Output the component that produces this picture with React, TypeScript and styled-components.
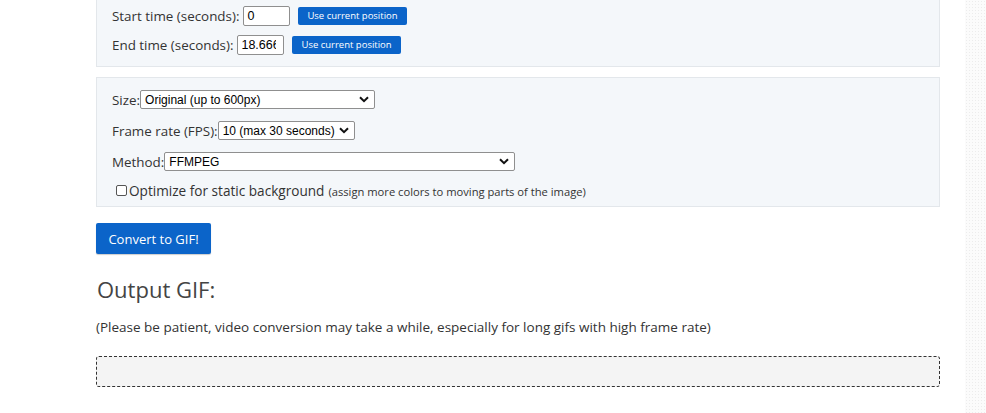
import React from "react";
import styled, { createGlobalStyle } from "styled-components";

const GlobalStyle = createGlobalStyle`
  html, body {
    margin: 0;
    padding: 0;
    background: #ffffff;
    overflow: hidden;
  }
  body {
    font-family: "Open Sans", "Liberation Sans", sans-serif;
    color: #333333;
  }
  * {
    box-sizing: border-box;
  }
`;

const Page = styled.div`
  display: flex;
  height: 413px;
`;

const Main = styled.div`
  flex: 1;
`;

const Column = styled.div`
  width: 844px;
  margin-left: 96px;
  display: flex;
  flex-direction: column;
`;

const Strip = styled.div`
  width: 21px;
  height: 413px;
  background-color: #fbfbfb;
  background-image: radial-gradient(#ececec 0.6px, transparent 0.7px);
  background-size: 3px 3px;
`;

const Panel = styled.div<{ $top?: boolean }>`
  background: #f4f7fa;
  border: 1px solid #e3e7eb;
  border-top: ${(p) => (p.$top ? "none" : "1px solid #e3e7eb")};
  padding: ${(p) => (p.$top ? "5px 15px 11px" : "12px 15px 6px")};
  margin-bottom: 10px;
  display: flex;
  flex-direction: column;
`;

const Row = styled.div<{ $h: number; $pt?: number }>`
  display: flex;
  align-items: center;
  height: ${(p) => p.$h}px;
  padding-top: ${(p) => p.$pt ?? 0}px;
  font-size: 13.4px;
  color: #333;
  white-space: nowrap;
`;

const Label = styled.span<{ $gap?: number }>`
  margin-right: ${(p) => p.$gap ?? 0}px;
`;

const TimeInput = styled.input`
  width: 47px;
  height: 20px;
  border: 1px solid #8f8f8f;
  border-radius: 2px;
  padding: 1px 7px 1px 3px;
  font-family: "Liberation Sans", Arial, sans-serif;
  font-size: 12.5px;
  color: #000;
  background: #fff;
  margin-right: 8px;
  outline: none;
`;

const SmallButton = styled.button`
  height: 18px;
  padding: 0 9px;
  border: none;
  border-radius: 2px;
  background: #0b64c9;
  color: #fff;
  font-family: "Open Sans", "Liberation Sans", sans-serif;
  font-size: 9.5px;
  cursor: pointer;
`;

const SelectBox = styled.div<{ $w: number }>`
  width: ${(p) => p.$w}px;
  height: 19px;
  border: 1px solid #8f8f8f;
  border-radius: 2px;
  background: #fff;
  display: flex;
  align-items: center;
  justify-content: space-between;
  padding: 0 5px 0 4px;
  font-family: "Liberation Sans", Arial, sans-serif;
  font-size: 12px;
  color: #000;
`;

const CheckRow = styled(Row)`
  padding-left: 4px;
  font-size: 13.6px;
`;

const CheckBox = styled.span`
  width: 11px;
  height: 11px;
  border: 1px solid #555;
  border-radius: 2px;
  background: #fff;
  margin-right: 2px;
`;

const Hint = styled.span`
  font-size: 11.2px;
  margin-left: 4px;
  padding-top: 2px;
`;

const ConvertButton = styled.button`
  align-self: flex-start;
  width: 115px;
  height: 31px;
  margin-top: 6px;
  border: none;
  border-radius: 2px;
  background: #0b64c9;
  color: #fff;
  font-family: "Open Sans", "Liberation Sans", sans-serif;
  font-size: 13px;
  box-shadow: 0 1px 1px rgba(0, 0, 0, 0.2);
  cursor: pointer;
`;

const Heading = styled.h2`
  margin: 20px 0 0 1px;
  font-weight: 400;
  font-size: 22px;
  line-height: 30px;
  color: #444;
`;

const Note = styled.p`
  margin: 14px 0 0;
  font-size: 13.5px;
  line-height: 18px;
  color: #333;
`;

const OutputBox = styled.div`
  margin-top: 20px;
  height: 31px;
  border: 1px dashed #333;
  border-radius: 3px;
  background: #f4f4f4;
`;

const Chevron = () => (
  <svg width="10" height="7" viewBox="0 0 10 7">
    <path d="M1 1.2 L5 5.2 L9 1.2" fill="none" stroke="#111" strokeWidth="2" />
  </svg>
);

const Select = ({ width, value }: { width: number; value: string }) => (
  <SelectBox $w={width}>
    <span>{value}</span>
    <Chevron />
  </SelectBox>
);

const App = () => {
  return (
    <Page>
      <GlobalStyle />
      <Main>
        <Column>
          <Panel $top>
            <Row $h={21}>
              <Label $gap={4}>Start time (seconds):</Label>
              <TimeInput readOnly defaultValue="0" />
              <SmallButton>Use current position</SmallButton>
            </Row>
            <Row $h={29} $pt={8}>
              <Label $gap={4}>End time (seconds):</Label>
              <TimeInput readOnly defaultValue="18.66666" />
              <SmallButton>Use current position</SmallButton>
            </Row>
          </Panel>

          <Panel>
            <Row $h={19}>
              <Label>Size:</Label>
              <Select width={235} value="Original (up to 600px)" />
            </Row>
            <Row $h={31} $pt={12}>
              <Label>Frame rate (FPS):</Label>
              <Select width={137} value="10 (max 30 seconds)" />
            </Row>
            <Row $h={31} $pt={12}>
              <Label>Method:</Label>
              <Select width={351} value="FFMPEG" />
            </Row>
            <CheckRow $h={29} $pt={10}>
              <CheckBox />
              Optimize for static background
              <Hint>(assign more colors to moving parts of the image)</Hint>
            </CheckRow>
          </Panel>

          <ConvertButton>Convert to GIF!</ConvertButton>
          <Heading>Output GIF:</Heading>
          <Note>
            (Please be patient, video conversion may take a while, especially for long gifs with
            high frame rate)
          </Note>
          <OutputBox />
        </Column>
      </Main>
      <Strip />
    </Page>
  );
};

export default App;
